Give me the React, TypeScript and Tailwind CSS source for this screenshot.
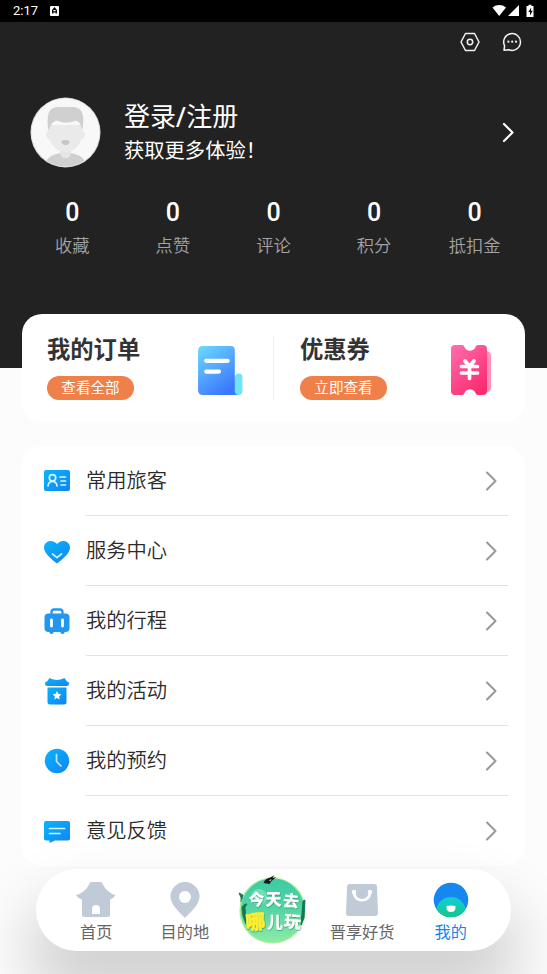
import type { ReactNode } from "react";

const stats = ["收藏", "点赞", "评论", "积分", "抵扣金"];

function StatusBar() {
  return (
    <div className="flex h-[22px] items-center justify-between bg-black pl-[13px] pr-[12px] text-white">
      <div className="flex items-center">
        <span className="text-[13px] leading-[22px]">2:17</span>
        <svg className="ml-[12px]" width="9" height="10" viewBox="0 0 9 10">
          <rect width="9" height="10" rx="1" fill="#fff" />
          <path d="M2.7 7.6V4.2L4.5 2l1.8 2.2v3.4M3 5.8h3" fill="none" stroke="#000" strokeWidth="1.3" />
        </svg>
      </div>
      <svg width="43" height="14" viewBox="0 0 43 14" fill="#fff">
        <path d="M0.5 3.5C4.5.2 10 .2 14 3.5L7.2 12Z" />
        <path d="M27 1v11H16Z" />
        <path d="M34.500 2h2V.8h3V2h2v11h-7Z" />
        <path d="M39.2 3.5 36.4 8H38v3.5L40.7 6.8H39Z" fill="#000" />
      </svg>
    </div>
  );
}

function Avatar() {
  return (
    <svg width="71" height="71" viewBox="0 0 71 71">
      <defs>
        <clipPath id="avatar">
          <circle cx="35.5" cy="35.5" r="34" />
        </clipPath>
      </defs>
      <circle cx="35.5" cy="35.5" r="35" fill="#dcdcdc" />
      <g clipPath="url(#avatar)">
        <rect width="71" height="71" fill="#f8f8f8" />
        <path d="M15 71c0-10 6-13 15-15h11c9 2 15 5 15 15Z" fill="#d0d0d0" />
        <path d="M30 48h11v8c-1 7-10 7-11 0Z" fill="#e5e5e5" />
        <path d="M19 28h33v6c4 0 4 8-1 9-2 7-9 12-15.500 12S22 50 20 43c-5-1-5-9-1-9Z" fill="#eaeaea" />
        <path d="M18.500 34c-2-15-1-24 10-24h14c11 0 12 9 10 24-1-6-4-11-8-10-5 2-12 2-16 0-5-1-8 4-10 10Z" fill="#d0d0d0" />
        <path d="M31.500 44q4-2 8 0 0 4-4 4t-4-4Z" fill="#c6c6c6" />
      </g>
    </svg>
  );
}

function Header() {
  return (
    <header className="h-[346px] bg-[#222222] text-white">
      <div className="flex h-[40px] items-center justify-end gap-[22px] pr-[25px]">
        <svg width="20" height="20" viewBox="0 0 20 20" fill="none" stroke="#f3f3f3" strokeWidth="1.5" strokeLinejoin="round">
          <path d="M5.500 1.500h9L19 10l-4.500 8.500h-9L1 10Z" />
          <circle cx="10" cy="10" r="2.700" />
        </svg>
        <svg width="20" height="20" viewBox="0 0 20 20" fill="none" stroke="#f3f3f3" strokeWidth="1.500" strokeLinejoin="round">
          <path d="M2 18.300 2.600 13.800A8.400 8.400 0 1 1 7 17.800Z" />
          <g fill="#f3f3f3" stroke="none">
            <circle cx="6.400" cy="9.700" r="1.100" />
            <circle cx="10.200" cy="9.700" r="1.100" />
            <circle cx="14" cy="9.700" r="1.100" />
          </g>
        </svg>
      </div>
      <div className="mt-[35px] flex h-[71px] items-center pl-[30px] pr-[32px]">
        <Avatar />
        <div className="ml-[23px] flex-1 pt-[1px]">
          <div className="text-[26px] leading-[36px]">
            登录<span className="font-medium">/</span>注册
          </div>
          <div className="text-[20.3px] leading-[33px]">获取更多体验！</div>
        </div>
        <svg width="13" height="21" viewBox="0 0 13 21" fill="none" stroke="#fff" strokeWidth="2.200" strokeLinecap="round" strokeLinejoin="round">
          <path d="M2 2l8.500 8.500L2 19" />
        </svg>
      </div>
      <div className="mt-[31px] grid grid-cols-5 px-[22px] text-center">
        {stats.map((label) => (
          <div key={label}>
            <div className="text-[25px] font-medium leading-[28px]">0</div>
            <div className="mt-[6px] text-[17.3px] font-[350] leading-[26px] text-[#a3a3a3]">{label}</div>
          </div>
        ))}
      </div>
    </header>
  );
}

function OrderIcon() {
  return (
    <svg className="mt-[5px]" width="46" height="51" viewBox="0 0 45 50">
      <defs>
        <linearGradient id="order" x1="0" y1="0" x2="0.600" y2="1">
          <stop stopColor="#6adcfc" />
          <stop offset="0.500" stopColor="#55a8ff" />
          <stop offset="1" stopColor="#3b78ff" />
        </linearGradient>
      </defs>
      <path d="M37 33q0-5 4-5 3.500 0 3.500 4v13q0 4-4 4H34Z" fill="#70e2fa" />
      <path d="M6 1h27q4 0 4 4v40q0 3 3 4H6q-5 0-5-5V6q0-5 5-5Z" fill="url(#order)" />
      <path d="M9 15.500h21M9 26h12.500" stroke="#fff" strokeWidth="4.200" strokeLinecap="round" />
    </svg>
  );
}

function CouponIcon() {
  return (
    <svg className="mt-[4px]" width="42" height="52" viewBox="0 0 42 52">
      <defs>
        <linearGradient id="coupon" x1="0" y1="0" x2="0.700" y2="1">
          <stop stopColor="#ff6fae" />
          <stop offset="1" stopColor="#fb2c70" />
        </linearGradient>
      </defs>
      <path d="M35 7q6 0 6 5v32q0 4-6 5Z" fill="#ff92ba" />
      <path d="M5 1h7q2 0 2.500 2c2 5 9 5 11 0q.500-2 2.500-2h5q4 0 4 4v42q0 4-4 4h-5q-2 0-2.500-2c-2-5-9-5-11 0q-.500 2-2.500 2H5q-4 0-4-4V5q0-4 4-4Z" fill="url(#coupon)" />
      <path d="m15 17 4.500 5.500L24 17M11.500 22.500h16M11.500 29h16M19.500 23v11.500" fill="none" stroke="#fff" strokeWidth="3.700" strokeLinecap="round" strokeLinejoin="round" />
    </svg>
  );
}

function Promo({ title, action, icon, className }: { title: string; action: string; icon: ReactNode; className: string }) {
  return (
    <div className={`flex items-center justify-between ${className}`}>
      <div className="-mt-[2px]">
        <div className="text-[23.3px] font-bold leading-[32px] text-[#333]">{title}</div>
        <div className="mt-[10px] flex h-[24px] w-[87px] items-center justify-center rounded-full bg-[#ef8049] text-[14.6px] leading-[24px] text-white">
          {action}
        </div>
      </div>
      {icon}
    </div>
  );
}

function MenuIcon({ kind }: { kind: string }) {
  const line = { fill: "none", stroke: "#fff", strokeLinecap: "round" as const, strokeLinejoin: "round" as const };
  return (
    <svg width="28" height="28" viewBox="0 0 28 28">
      <defs>
        <linearGradient id={`menu-${kind}`} x1="0" y1="0" x2="1" y2="1">
          <stop stopColor="#08b5ff" />
          <stop offset="1" stopColor="#1284f0" />
        </linearGradient>
      </defs>
      <g fill={`url(#menu-${kind})`}>
        {kind === "card" && (
          <>
            <rect x="1" y="3" width="26" height="21" rx="2" />
            <g {...line} stroke="#d7f6ff" strokeWidth="1.700">
              <circle cx="9.500" cy="10.800" r="3.200" />
              <path d="M5 19c.5-6 8.500-6 9 0M17 10h5.500M18 14h4.500M18 18h4.500" />
            </g>
          </>
        )}
        {kind === "heart" && (
          <>
            <path d="M14 26.500C9 22.500 1 16.500 1 10.500 1 4 9.500 1.500 14 7c4.500-5.500 13-3 13 3.500 0 6-8 12-13 16Z" />
            <path d="m9.500 17 4.500 3.700 4.500-3.700" {...line} stroke="#c5f1ff" strokeWidth="1.700" />
          </>
        )}
        {kind === "case" && (
          <g fill="#2397ee">
            <path d="M8.500 8V5q0-2.500 2.500-2.500h6q2.500 0 2.500 2.500v3" fill="none" stroke="#2397ee" strokeWidth="2.300" />
            <rect x="1.500" y="6.500" width="25" height="18.500" rx="4" />
            <path d="M6.500 23h4v3q-2 2-4 0ZM17.500 23h4v3q-2 2-4 0Z" />
            <path d="M8.500 13v6M19.500 13v6" {...line} strokeWidth="2.800" />
          </g>
        )}
        {kind === "gift" && (
          <>
            <path d="M4 4.500 6.500 1q4 2 7.500 2t7.500-2L24 4.500q2 0 2 2.200T23.500 9h-19Q2 9 2 6.700t2-2.200Z" />
            <path d="M4.500 10.500h19V25q0 2.500-2.500 2.500H7Q4.500 27.500 4.500 25Z" />
            <path d="m14 14 1.300 2.800 3 .4-2.200 2.200.6 3-2.700-1.500-2.700 1.500.6-3-2.200-2.200 3-.4Z" fill="#fff" />
          </>
        )}
        {kind === "clock" && (
          <>
            <circle cx="14" cy="14" r="12.200" />
            <path d="M13.500 7.500v7l4.500 4.500" {...line} stroke="#bcebff" strokeWidth="1.700" />
          </>
        )}
        {kind === "chat" && (
          <>
            <path d="M3 4h22q2 0 2 2v15.500q0 2-2 2H12L6.500 26v-2.500H3q-2 0-2-2V6q0-2 2-2Z" />
            <path d="M6.500 11.500h15M6.500 16.500h10.500" {...line} stroke="#d2f4ff" strokeWidth="1.700" />
          </>
        )}
      </g>
    </svg>
  );
}

const menu = [
  { label: "常用旅客", kind: "card" },
  { label: "服务中心", kind: "heart" },
  { label: "我的行程", kind: "case" },
  { label: "我的活动", kind: "gift" },
  { label: "我的预约", kind: "clock" },
  { label: "意见反馈", kind: "chat" },
];

function MenuList() {
  return (
    <div className="mx-[22px] mt-[24px] rounded-[20px] bg-white">
      {menu.map((item, i) => (
        <div key={item.kind} className="flex h-[70px] pl-[21px] pr-[17px]">
          <div className="mt-[21px] w-[43px]">
            <MenuIcon kind={item.kind} />
          </div>
          <div className={`flex flex-1 justify-between border-b pr-[10px] ${i < 5 ? "border-[#e2e2e2]" : "border-transparent"}`}>
            <span className="mt-[20px] text-[20.3px] font-[350] leading-[30px] text-[#2b2b2b]">{item.label}</span>
            <svg className="mt-[24px]" width="13" height="21" viewBox="0 0 13 21" fill="none" stroke="#999" strokeWidth="2.100" strokeLinecap="round" strokeLinejoin="round">
              <path d="M2 2.500l8.500 8.500L2 19.500" />
            </svg>
          </div>
        </div>
      ))}
    </div>
  );
}

function TravelBadge() {
  return (
    <svg width="72" height="72" viewBox="0 0 72 72">
      <defs>
        <linearGradient id="badge" x1="0" y1="0" x2="0" y2="1">
          <stop stopColor="#3ccaa3" />
          <stop offset="0.500" stopColor="#55d6a5" />
          <stop offset="1" stopColor="#8deda5" />
        </linearGradient>
        <filter id="lettering" x="-10%" y="-10%" width="120%" height="130%">
          <feDropShadow dx="0.400" dy="0.700" stdDeviation="0.500" floodColor="#087d62" floodOpacity="0.800" />
        </filter>
      </defs>
      <circle cx="35.500" cy="37.500" r="32.500" fill="url(#badge)" stroke="#b4ed9c" strokeWidth="1.200" />
      <circle cx="22" cy="24" r="8" fill="#72e0b4" />
      <path d="M4 29q1-4-2-9l4 2-1 4M5 34q3-4 5-3l-2 3 1 17q-4-8-4-17ZM66 28l2-1-1 18-3 7Z" fill="#13764f" stroke="#13764f" strokeWidth="0.900" />
      <path d="M27.500 8c2-3 6-3 10-6l-2 3 4-1-5 4-2 3-6-1Z" fill="#141a16" />
      <path d="M32 7.500l2.500-1.500-1 2Z" fill="#fff" />
      <g fontSize="16" fontWeight="900" fill="#fff" filter="url(#lettering)">
        <text transform="translate(12 33) rotate(-4)">今</text>
        <text x="28.500" y="32">天</text>
        <text transform="translate(45.500 33) rotate(5)">去</text>
        <text transform="translate(9 57) rotate(-5) scale(1.250)" fill="#fff02e" stroke="#fff02e" strokeWidth="0.300">哪</text>
        <text x="30" y="55">儿</text>
        <text transform="translate(46.500 54) rotate(5) scale(1.070)">玩</text>
      </g>
    </svg>
  );
}

function NavItem({ label, active = false, children }: { label: string; active?: boolean; children: ReactNode }) {
  return (
    <div className="flex flex-col items-center pt-[12px]">
      <svg width="42" height="38" viewBox="0 0 42 38">{children}</svg>
      <span className={`mt-[2px] text-[16.2px] leading-[24px] ${active ? "text-[#1685e8]" : "text-[#666]"}`}>{label}</span>
    </div>
  );
}

function BottomNav() {
  return (
    <nav className="absolute left-[36px] top-[869px] grid h-[82px] w-[475px] grid-cols-5 rounded-full bg-white px-[16px] shadow-[0_40px_60px_10px_rgba(0,0,0,0.17)]">
      <NavItem label="首页">
        <path d="M16.500 1h9q1 0 1.500 1 5 10 13.500 12-2 3.500-5.500 4.500V34q0 2-2 2H9q-2 0-2-2V18.500Q3 17.500 1 14 10 12 15 2q.5-1 1.500-1Z" fill="#c1cad7" />
        <path d="M17 33v-5q0-4 4-4t4 4v5Z" fill="#fff" />
      </NavItem>
      <NavItem label="目的地">
        <path d="M21 37C14 30 6.500 23 6.500 15.500a14.500 14.500 0 1 1 29 0C35.500 23 28 30 21 37Z" fill="#c1cad7" />
        <circle cx="21" cy="16" r="6" fill="#fff" />
      </NavItem>
      <div className="flex justify-center pt-[4px]">
        <TravelBadge />
      </div>
      <NavItem label="晋享好货">
        <path d="M9 3h24q3 0 3 3l1 26q0 3-3 3H8q-3 0-3-3L6 6q0-3 3-3Z" fill="#c1cad7" />
        <path d="M13 11c0 11 16 11 16 0" fill="none" stroke="#fff" strokeWidth="2.700" strokeLinecap="round" />
        <circle cx="13" cy="11" r="2.200" fill="#fff" />
        <circle cx="29" cy="11" r="2.200" fill="#fff" />
      </NavItem>
      <NavItem label="我的" active>
        <defs>
          <clipPath id="face">
            <circle cx="21" cy="19" r="17.300" />
          </clipPath>
          <linearGradient id="mint" x1="0" y1="0" x2="0" y2="0.700">
            <stop stopColor="#13ced8" />
            <stop offset="1" stopColor="#12c785" />
          </linearGradient>
        </defs>
        <circle cx="21" cy="19" r="17.300" fill="#1686f0" />
        <circle cx="21" cy="31" r="15" fill="url(#mint)" clipPath="url(#face)" />
        <path d="M16.500 25q4.500-1 9 0 .5 6-4.500 6t-4.500-6Z" fill="#fff" />
      </NavItem>
    </nav>
  );
}

export default function App() {
  return (
    <div lang="zh-CN" className="relative h-[974px] w-[547px] overflow-hidden bg-[#fcfcfc] font-[Roboto,'Noto_Sans_CJK_SC',sans-serif]">
      <StatusBar />
      <Header />
      <section className="relative mx-[22px] -mt-[54px] flex h-[108px] items-center rounded-[20px] bg-white">
        <Promo title="我的订单" action="查看全部" icon={<OrderIcon />} className="w-[251px] pl-[25px] pr-[30px]" />
        <div className="h-[64px] w-px bg-[#eee]" />
        <Promo title="优惠券" action="立即查看" icon={<CouponIcon />} className="flex-1 pl-[26px] pr-[33px]" />
      </section>
      <MenuList />
      <BottomNav />
    </div>
  );
}
